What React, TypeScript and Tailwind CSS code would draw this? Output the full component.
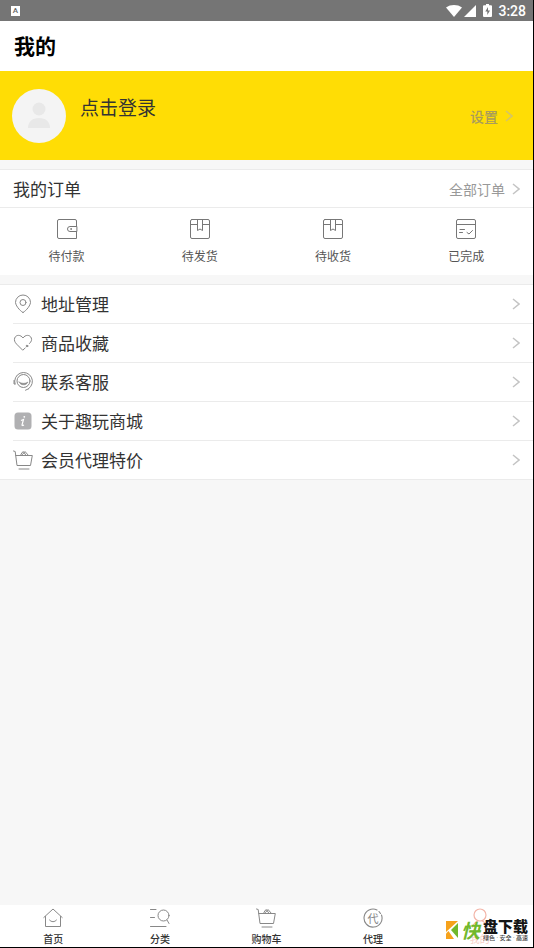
import type { ReactNode } from "react";

const line = {
  fill: "none",
  stroke: "currentColor",
  strokeLinecap: "round" as const,
  strokeLinejoin: "round" as const,
};

function Chevron({ className = "text-[#c4c4c4]" }: { className?: string }) {
  return (
    <svg viewBox="0 0 8 12" className={`h-3 w-2 shrink-0 ${className}`} aria-hidden="true" {...line} strokeWidth="1.5" strokeLinecap="butt" strokeLinejoin="miter">
      <path d="M1 1l6 5-6 5" />
    </svg>
  );
}

function WalletIcon() {
  return (
    <svg viewBox="0 0 22 22" className="size-[22px]" aria-hidden="true" {...line} strokeWidth="1">
      <path d="M20.5 8.500V3a1.500 1.500 0 0 0-1.500-1.500H3A1.500 1.500 0 0 0 1.500 3v16a1.500 1.500 0 0 0 1.500 1.500h17.500V13.500" />
      <path d="M20.500 8.500h-6.500a2.500 2.500 0 0 0 0 5h6.500z" />
      <circle cx="15" cy="11" r=".4" />
    </svg>
  );
}

function BoxIcon() {
  return (
    <svg viewBox="0 0 22 22" className="size-[22px]" aria-hidden="true" {...line} strokeWidth="1">
      <rect x="1.500" y="1.500" width="19" height="19" rx="1.500" />
      <path d="M1.500 6.500H8M14 6.500h6.500M8.500 1.500v11l2.500-1.500 2.500 1.500V1.500" />
    </svg>
  );
}

function DoneIcon() {
  return (
    <svg viewBox="0 0 22 22" className="size-[22px]" aria-hidden="true" {...line} strokeWidth="1">
      <rect x="1.500" y="1.500" width="19" height="19" rx="1.500" />
      <path d="M1.500 6.500h19M5 11.500h4.500M4.500 14.500h3M12 14.500l2 1.500 3.500-3.500" />
    </svg>
  );
}

function PinIcon() {
  return (
    <svg viewBox="0 0 20 20" className="size-5" aria-hidden="true" {...line} strokeWidth="1">
      <path d="M10 18.500c-1 0-7-5.500-7.500-10a7.500 7.500 0 0 1 15 0C17 13 11 18.500 10 18.500z" />
      <circle cx="10" cy="8.500" r="3" />
    </svg>
  );
}

function HeartIcon() {
  return (
    <svg viewBox="0 0 20 20" className="size-5" aria-hidden="true" {...line} strokeWidth="1">
      <path d="M16.500 10.500c2-2 2.500-3.600 1.800-5.500-1.300-3.500-6-3.500-8.300 0C7.700 1.500 3 1.500 1.700 5c-.8 2.300.1 4.200 2 6.200l6 6 2.500-2.200" />
      <circle cx="14" cy="13" r=".8" fill="currentColor" />
    </svg>
  );
}

function ServiceIcon() {
  return (
    <svg viewBox="0 0 20 20" className="size-5" aria-hidden="true" {...line} strokeWidth="1">
      <circle cx="10.500" cy="9" r="6.500" />
      <path d="M2 12A8.900 8.900 0 1 1 15.500 16.800M1 8.500v3.500h1M12.500 18.200l3-1.400" />
      <path d="M6 10c1.800 3.800 7.200 3.800 9 0-2.500 1.800-6.500 1.800-9 0z" fill="currentColor" strokeWidth=".5" />
    </svg>
  );
}

function InfoIcon() {
  return (
    <svg viewBox="0 0 20 20" className="size-5" aria-hidden="true">
      <rect x="1.500" y="1.500" width="17" height="17" rx="3.500" fill="#b0b0b2" />
      <path d="M8 9.500l2.500-1L9 14c0 .8.800.6 2 0" fill="none" stroke="#fff" strokeWidth="1.200" />
      <circle cx="11.300" cy="5.800" r=".9" fill="#fff" />
    </svg>
  );
}

function CartIcon() {
  return (
    <svg viewBox="0 0 20 20" className="size-5" aria-hidden="true" {...line} strokeWidth="1">
      <path d="M.5 1l1.700.5L4 15.500h13.500L19.300 5.500H2.800M7.500 5.500L9 2.500l1.500-.8 2 3M9.500 4.500l2.500-3 3.500 4M6 19h10" />
    </svg>
  );
}

function HomeIcon() {
  return (
    <svg viewBox="0 0 20 20" className="size-5" aria-hidden="true" {...line} strokeWidth="1">
      <path d="M2.500 8.500V18.500h15V8.500M.8 9.500L10 1l9.200 8.500M6.500 12c2 2.300 5 2.300 7 0" />
    </svg>
  );
}

function CategoryIcon() {
  return (
    <svg viewBox="0 0 20 20" className="size-5" aria-hidden="true" {...line} strokeWidth="1">
      <circle cx="13.500" cy="7.500" r="5.500" />
      <path d="M17 12l2 3.500M.5 1.500H6M.5 9.500h4M.5 18.500H16" />
    </svg>
  );
}

function AgentIcon() {
  return (
    <span className="relative flex size-5 items-center justify-center">
      <svg viewBox="0 0 20 20" className="absolute inset-0 size-5" aria-hidden="true" {...line} strokeWidth="1.100">
        <path d="M14 2A9 9 0 1 0 18.500 7M16 3.500l1.500 2" />
      </svg>
      <span className="text-[11px] leading-none">代</span>
    </span>
  );
}

function MineIcon() {
  return (
    <svg viewBox="0 0 20 20" className="size-5 text-[#f3b5a8]" aria-hidden="true" {...line} strokeWidth="1.200">
      <circle cx="10" cy="7" r="6" />
      <path d="M2.500 19c1-3 3-5 5-6M17.500 19c-1-3-3-5-5-6" />
    </svg>
  );
}

const orders: { label: string; icon: ReactNode }[] = [
  { label: "待付款", icon: <WalletIcon /> },
  { label: "待发货", icon: <BoxIcon /> },
  { label: "待收货", icon: <BoxIcon /> },
  { label: "已完成", icon: <DoneIcon /> },
];

const menu: { label: string; icon: ReactNode }[] = [
  { label: "地址管理", icon: <PinIcon /> },
  { label: "商品收藏", icon: <HeartIcon /> },
  { label: "联系客服", icon: <ServiceIcon /> },
  { label: "关于趣玩商城", icon: <InfoIcon /> },
  { label: "会员代理特价", icon: <CartIcon /> },
];

const tabs: { label: string; icon: ReactNode; active?: boolean }[] = [
  { label: "首页", icon: <HomeIcon /> },
  { label: "分类", icon: <CategoryIcon /> },
  { label: "购物车", icon: <CartIcon /> },
  { label: "代理", icon: <AgentIcon /> },
  { label: "我的", icon: <MineIcon />, active: true },
];

function StatusBar() {
  return (
    <div className="flex h-[21px] items-center justify-between bg-[#757575] pr-[7px] pl-[11px] text-white">
      <span className="flex h-[10px] w-[9px] items-center justify-center bg-white font-['Roboto',sans-serif] text-[8px] leading-none font-medium text-[#666]">A</span>
      <div className="flex items-center">
        <svg viewBox="0 0 16 12" className="h-3 w-4" fill="currentColor" aria-hidden="true">
          <path d="M0 2.500C4.500-.8 11.500-.8 16 2.500L8 12z" />
        </svg>
        <svg viewBox="0 0 12 12" className="ml-[2px] size-3" fill="currentColor" aria-hidden="true">
          <path d="M12 0v12H0z" />
        </svg>
        <svg viewBox="0 0 9 13" className="ml-[7px] h-[13px] w-[9px]" fill="currentColor" aria-hidden="true">
          <path d="M3 0h3v1.300h2q1 0 1 1V12q0 1-1 1H1q-1 0-1-1V2.300q0-1 1-1h2z" />
          <path d="M5 3L2.300 7.500h2v3.500L7 6.500H5z" fill="#757575" />
        </svg>
        <span className="ml-[6px] font-['Roboto',sans-serif] text-[14px] leading-5 font-medium">3:28</span>
      </div>
    </div>
  );
}

function Watermark() {
  return (
    <div className="absolute right-[5px] bottom-[6px] flex items-center">
      <svg viewBox="0 0 12 18" className="h-[18px] w-3" aria-hidden="true">
        <path d="M0 0h12L0 11z" fill="#f6a21c" />
        <path d="M0 12.500L2.500 10 8 18H0z" fill="#f6a21c" />
        <path d="M12 2v15L5 9z" fill="#71b82c" />
      </svg>
      <span className="ml-[3px] text-[19px] leading-5 font-bold text-[#71b82c] italic">快</span>
      <span className="ml-[3px] flex w-[45px] flex-col">
        <span className="text-[15px] leading-4 font-black text-[#151515]">盘下载</span>
        <span className="flex justify-between text-[6px] leading-[7px] font-medium text-[#444]">
          <span>绿色</span>
          <span className="font-['Liberation_Sans',sans-serif]">·</span>
          <span>安全</span>
          <span className="font-['Liberation_Sans',sans-serif]">·</span>
          <span>高速</span>
        </span>
      </span>
    </div>
  );
}

export default function App() {
  return (
    <div className="relative flex min-h-screen flex-col border-r border-b border-black bg-[#f7f7f7] font-['Noto_Sans_CJK_SC',sans-serif] text-[#333]">
      <StatusBar />
      <header className="flex h-[50px] items-center bg-white px-[14px] pb-[3px]">
        <h1 className="text-[21px] leading-7 font-bold text-black">我的</h1>
      </header>

      <section className="flex h-[89px] items-center bg-[#ffdd05] pr-5 pl-3">
        <button type="button" className="flex flex-1 items-start text-left">
          <span className="flex size-[54px] items-center justify-center rounded-full bg-[#f4f4f4]">
            <svg viewBox="0 0 24 30" className="h-[30px] w-6" fill="#e8e8e8" aria-hidden="true">
              <circle cx="12" cy="8" r="6.500" />
              <path d="M1 27c0-6 4-10 11-10s11 4 11 10z" />
            </svg>
          </span>
          <span className="ml-[14px] pt-1 text-[19px] leading-7">点击登录</span>
        </button>
        <button type="button" className="flex items-center gap-[7px] text-[14px] leading-5 font-medium text-[#a89b5c]">
          设置
          <Chevron className="text-[#d3c46a]" />
        </button>
      </section>

      <section className="mt-[9px] border-t border-[#ebebeb] bg-white">
        <div className="flex h-[38px] items-center justify-between border-b border-[#ebebeb] px-[13px]">
          <h2 className="text-[17px] leading-6">我的订单</h2>
          <button type="button" className="flex items-center gap-[7px] text-[14px] leading-5 text-[#999]">
            全部订单
            <Chevron />
          </button>
        </div>
        <div className="grid h-[67px] grid-cols-4">
          {orders.map((o) => (
            <button key={o.label} type="button" className="flex flex-col items-center pt-[10px] text-[#777]">
              {o.icon}
              <span className="mt-[7px] text-[12px] leading-[18px] text-[#555]">{o.label}</span>
            </button>
          ))}
        </div>
      </section>

      <section className="mt-[9px] border-y border-[#ebebeb] bg-white">
        <ul className="divide-y divide-[#ebebeb] pl-[13px]">
          {menu.map((m) => (
            <li key={m.label}>
              <button type="button" className="flex h-[38px] w-full items-center pr-[13px] text-left text-[#888]">
                {m.icon}
                <span className="ml-2 flex-1 text-[17px] leading-6 text-[#333]">{m.label}</span>
                <Chevron />
              </button>
            </li>
          ))}
        </ul>
      </section>

      <nav className="mt-auto grid h-[42px] grid-cols-5 bg-white">
        {tabs.map((t) => (
          <button key={t.label} type="button" className="flex flex-col items-center pt-[3px] text-[#888]">
            {t.icon}
            <span className={t.active ? "mt-1 text-[10px] leading-[14px] text-[#f8d0c8]" : "mt-1 text-[10px] leading-[14px] font-medium text-[#333]"}>{t.label}</span>
          </button>
        ))}
      </nav>
      <Watermark />
    </div>
  );
}
